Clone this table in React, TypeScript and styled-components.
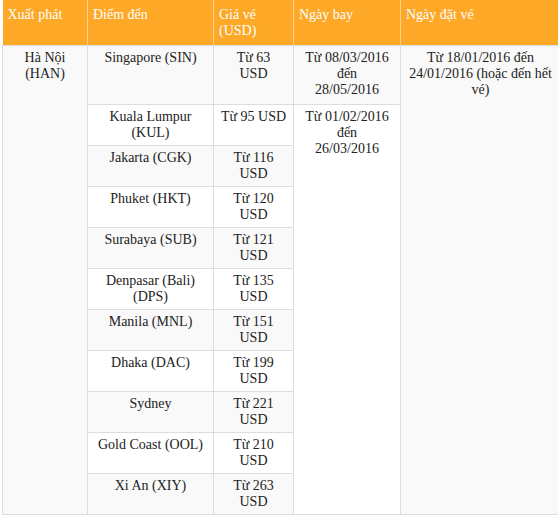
import React from "react";
import styled, { createGlobalStyle } from "styled-components";

const Global = createGlobalStyle`
  html, body { margin: 0; padding: 0; overflow: hidden; background: #fff; }
  body { font-family: "Times New Roman", "Liberation Serif", Tinos, "DejaVu Serif", serif; }
`;

const Wrap = styled.div`
  padding-left: 2px;
`;

const Table = styled.table`
  width: 558px;
  table-layout: fixed;
  border-collapse: collapse;
  font-family: "Times New Roman", "Liberation Serif", Tinos, "DejaVu Serif", serif;
  font-size: 14px;
  line-height: 16px;
  color: #222;
`;

const HeadCell = styled.th`
  background: #fda827;
  color: #fff;
  font-weight: normal;
  text-align: left;
  vertical-align: top;
  padding: 7px 5px 6px;
  border-left: 1px solid #fed08a;
  border-bottom: 1px solid #ddd;
  &:first-child { border-left: none; }
`;

const Cell = styled.td<{ $alt?: boolean; $extra?: boolean }>`
  background: ${(p) => (p.$alt ? "#f9f9f9" : "#fff")};
  text-align: center;
  vertical-align: top;
  padding: 4px 5px ${(p) => (p.$extra ? "6px" : "4px")};
  border: 1px solid #ddd;
  border-top: none;
`;

type Row = { dest: string; price: React.ReactNode };

const rows: Row[] = [
  { dest: "Singapore (SIN)", price: <>Từ 63<br />USD</> },
  { dest: "Kuala Lumpur (KUL)", price: "Từ 95 USD" },
  { dest: "Jakarta (CGK)", price: "Từ 116 USD" },
  { dest: "Phuket (HKT)", price: "Từ 120 USD" },
  { dest: "Surabaya (SUB)", price: "Từ 121 USD" },
  { dest: "Denpasar (Bali) (DPS)", price: "Từ 135 USD" },
  { dest: "Manila (MNL)", price: "Từ 151 USD" },
  { dest: "Dhaka (DAC)", price: "Từ 199 USD" },
  { dest: "Sydney", price: "Từ 221 USD" },
  { dest: "Gold Coast (OOL)", price: "Từ 210 USD" },
  { dest: "Xi An (XIY)", price: "Từ 263 USD" },
];

export default function App() {
  return (
    <Wrap>
      <Global />
      <Table>
        <colgroup>
          <col style={{ width: 85 }} />
          <col style={{ width: 126 }} />
          <col style={{ width: 80 }} />
          <col style={{ width: 107 }} />
          <col style={{ width: 160 }} />
        </colgroup>
        <thead>
          <tr>
            <HeadCell>Xuất phát</HeadCell>
            <HeadCell>Điểm đến</HeadCell>
            <HeadCell>Giá vé (USD)</HeadCell>
            <HeadCell>Ngày bay</HeadCell>
            <HeadCell>Ngày đặt vé</HeadCell>
          </tr>
        </thead>
        <tbody>
          {rows.map((r, i) => {
            const alt = i % 2 === 0;
            return (
              <tr key={i}>
                {i === 0 && (
                  <Cell $alt rowSpan={rows.length}>
                    Hà Nội (HAN)
                  </Cell>
                )}
                <Cell $alt={alt}>{r.dest}</Cell>
                <Cell $alt={alt}>{r.price}</Cell>
                {i === 0 && (
                  <Cell $alt $extra>
                    Từ 08/03/2016
                    <br />
                    đến
                    <br />
                    28/05/2016
                  </Cell>
                )}
                {i === 1 && (
                  <Cell rowSpan={rows.length - 1}>
                    Từ 01/02/2016
                    <br />
                    đến
                    <br />
                    26/03/2016
                  </Cell>
                )}
                {i === 0 && (
                  <Cell $alt rowSpan={rows.length}>
                    Từ 18/01/2016 đến 24/01/2016 (hoặc đến hết vé)
                  </Cell>
                )}
              </tr>
            );
          })}
        </tbody>
      </Table>
    </Wrap>
  );
}
